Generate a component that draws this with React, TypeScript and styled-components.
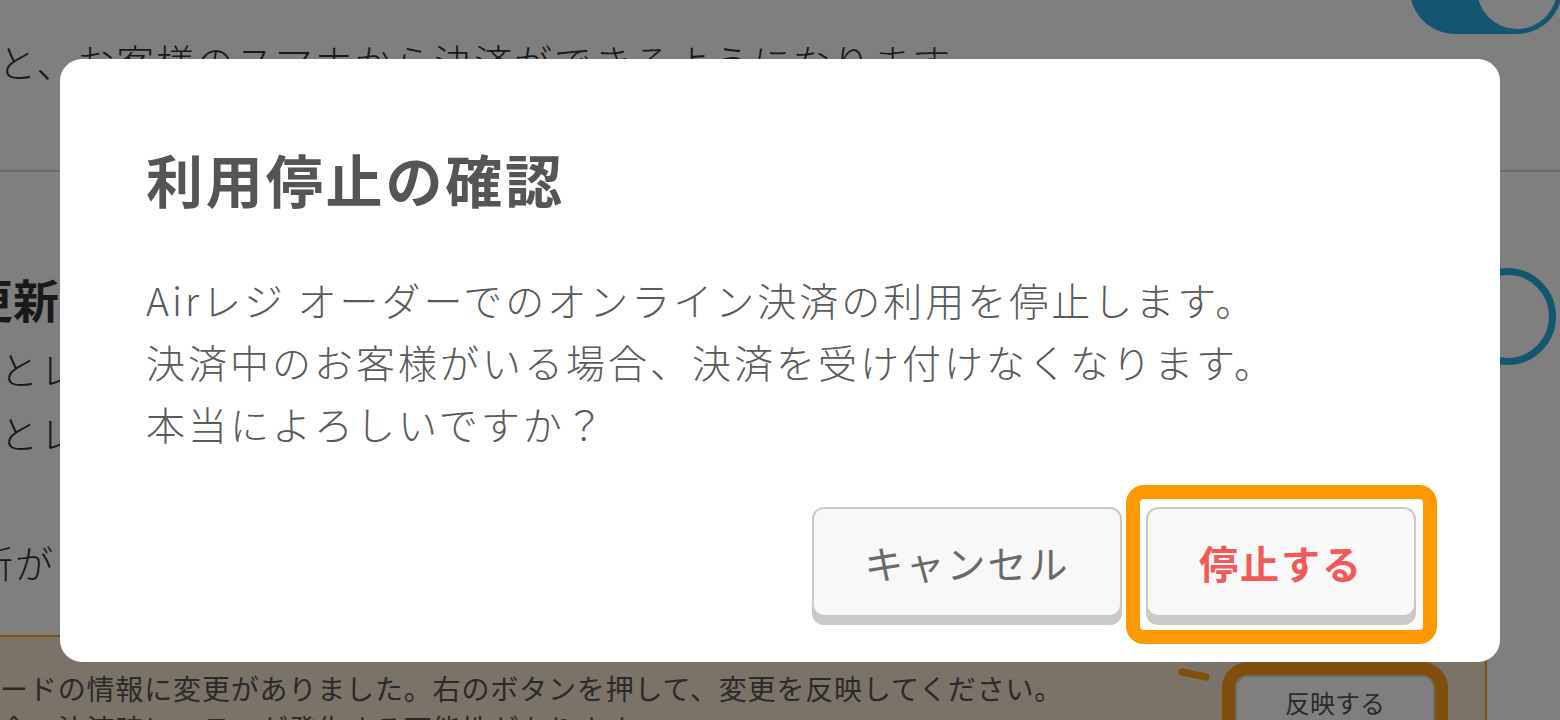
import styled, { createGlobalStyle } from "styled-components";

const GlobalStyle = createGlobalStyle`
    html, body {
        margin: 0;
        padding: 0;
        background: #ffffff;
        overflow: hidden;
    }
    body {
        font-family: "Noto Sans CJK JP", "Noto Sans", sans-serif;
        color: #333333;
    }
`;

const App = () => {
    return (
        <>
            <GlobalStyle />
            <Page>
                <TopSection>
                    <ToggleRow>
                        <Toggle>
                            <ToggleKnob />
                        </Toggle>
                    </ToggleRow>
                    <Desc $offset={-2}>と、お客様のスマホから決済ができるようになります。</Desc>
                </TopSection>
                <Divider />
                <Section>
                    <HeadRow>
                        <Heading>更新</Heading>
                        <RingKnob />
                    </HeadRow>
                    <Desc $offset={0}>とレジの注文データが連携されます。</Desc>
                    <Desc $offset={0}>とレジの商品データが連携されます。</Desc>
                    <Note>新がされると、お客様の画面に反映されます。</Note>
                </Section>
                <NoticeBar>
                    <NoticeText>
                        ードの情報に変更がありました。右のボタンを押して、変更を反映してください。
                        <br />
                        合、決済時にエラーが発生する可能性があります。
                    </NoticeText>
                    <ReflectWrap>
                        <Dashes width="48" height="40" viewBox="0 0 48 40">
                            <line x1="6" y1="26" x2="30" y2="31" />
                            <line x1="26" y1="12" x2="40" y2="2" />
                        </Dashes>
                        <ReflectButton>反映する</ReflectButton>
                    </ReflectWrap>
                </NoticeBar>
            </Page>
            <Overlay>
                <Modal>
                    <Title>利用停止の確認</Title>
                    <Body>
                        Airレジ オーダーでのオンライン決済の利用を停止します。
                        <br />
                        決済中のお客様がいる場合、決済を受け付けなくなります。
                        <br />
                        本当によろしいですか？
                    </Body>
                    <ButtonRow>
                        <CancelButton>キャンセル</CancelButton>
                        <StopButton>停止する</StopButton>
                    </ButtonRow>
                </Modal>
            </Overlay>
        </>
    );
};

const Page = styled.div`
    width: 1560px;
    height: 720px;
    overflow: hidden;
    display: flex;
    flex-direction: column;

    & > * {
        flex-shrink: 0;
    }
`;

const TopSection = styled.div`
    height: 170px;
    display: flex;
    flex-direction: column;
`;

const ToggleRow = styled.div`
    height: 29px;
    flex-shrink: 0;
    display: flex;
    justify-content: flex-end;
`;

const Toggle = styled.div`
    flex-shrink: 0;
    width: 152px;
    height: 90px;
    margin-top: -56px;
    margin-right: -2px;
    padding: 5px;
    box-sizing: border-box;
    border-radius: 45px;
    background: #28acde;
    display: flex;
    justify-content: flex-end;
    align-items: center;
`;

const ToggleKnob = styled.div`
    width: 80px;
    height: 80px;
    border-radius: 50%;
    background: #ffffff;
`;

const Desc = styled.div<{ $offset: number }>`
    flex-shrink: 0;
    margin-left: ${p => p.$offset}px;
    font-size: 38px;
    font-weight: 300;
    line-height: 64px;
    letter-spacing: 0.05em;
    white-space: nowrap;
    color: #333333;
`;

const Divider = styled.div`
    height: 2px;
    background: #d6d6d6;
`;

const Section = styled.div`
    padding-top: 94px;
    display: flex;
    flex-direction: column;
`;

const HeadRow = styled.div`
    height: 64px;
    flex-shrink: 0;
    display: flex;
    justify-content: space-between;
    align-items: flex-start;
    margin-bottom: 6px;
`;

const Heading = styled.div`
    margin-left: -33px;
    font-size: 46px;
    font-weight: 700;
    line-height: 64px;
    color: #333333;
`;

const RingKnob = styled.div`
    flex-shrink: 0;
    width: 97px;
    height: 97px;
    margin-top: 2px;
    margin-right: 4px;
    box-sizing: border-box;
    border-radius: 50%;
    border: 7px solid #28acde;
    background: #ffffff;
`;

const Note = styled.div`
    flex-shrink: 0;
    margin-top: 66px;
    margin-left: -25px;
    font-size: 38px;
    font-weight: 300;
    line-height: 64px;
    letter-spacing: 0.05em;
    white-space: nowrap;
    color: #333333;
`;

const NoticeBar = styled.div`
    margin-top: 41px;
    margin-left: -10px;
    width: 1497px;
    height: 200px;
    box-sizing: border-box;
    border: 2px solid #ff9f1c;
    background: #f6e4d0;
    padding: 25px 37px 0 8px;
    display: flex;
    justify-content: space-between;
    align-items: flex-start;
`;

const NoticeText = styled.div`
    margin-top: 6px;
    font-size: 28px;
    line-height: 40px;
    letter-spacing: 0.03em;
    white-space: nowrap;
    color: #555555;
`;

const ReflectWrap = styled.div`
    position: relative;
    flex-shrink: 0;
`;

const Dashes = styled.svg`
    position: absolute;
    left: -46px;
    top: -16px;
    stroke: #ff9f1c;
    stroke-width: 7px;
    stroke-linecap: round;
`;

const ReflectButton = styled.div`
    width: 226px;
    height: 96px;
    box-sizing: border-box;
    border: 13px solid #ff9f1c;
    border-radius: 26px;
    background: #ffffff;
    box-shadow: inset 0 0 0 2px #d8d8d8;
    display: flex;
    justify-content: center;
    align-items: flex-start;
    padding-top: 7px;
    font-size: 25px;
    line-height: 40px;
    color: #555555;
`;

const Overlay = styled.div`
    position: fixed;
    inset: 0;
    background: rgba(0, 0, 0, 0.5);
    display: flex;
    justify-content: center;
    align-items: center;
`;

const Modal = styled.div`
    width: 1440px;
    box-sizing: border-box;
    padding: 79px 84px 45px 86px;
    border-radius: 22px;
    background: #ffffff;
    display: flex;
    flex-direction: column;
`;

const Title = styled.h2`
    margin: 0;
    font-size: 57px;
    font-weight: 700;
    line-height: 80px;
    letter-spacing: 0.05em;
    color: #555555;
`;

const Body = styled.p`
    margin: 50px 0 0;
    font-size: 39px;
    font-weight: 300;
    line-height: 62px;
    letter-spacing: 3px;
    color: #5a5a5a;
`;

const ButtonRow = styled.div`
    margin-top: 53px;
    display: flex;
    justify-content: flex-end;
    gap: 24px;
`;

const ModalButton = styled.button`
    position: relative;
    height: 110px;
    box-sizing: border-box;
    border: 2px solid #c9c9c9;
    border-radius: 12px;
    background: #f8f8f8;
    box-shadow: 0 8px 0 #c9c9c9;
    font-family: "Noto Sans CJK JP", "Noto Sans", sans-serif;
    font-size: 39px;
    letter-spacing: 0.05em;
    padding: 0;
    cursor: pointer;
`;

const CancelButton = styled(ModalButton)`
    width: 310px;
    color: #6a6a6a;
    font-weight: 400;
`;

const StopButton = styled(ModalButton)`
    width: 270px;
    color: #f25a5a;
    font-weight: 700;

    &::after {
        content: "";
        position: absolute;
        top: -24px;
        left: -22px;
        right: -23px;
        bottom: -29px;
        border: 14px solid #ff9900;
        border-radius: 18px;
        pointer-events: none;
    }
`;

export default App;
